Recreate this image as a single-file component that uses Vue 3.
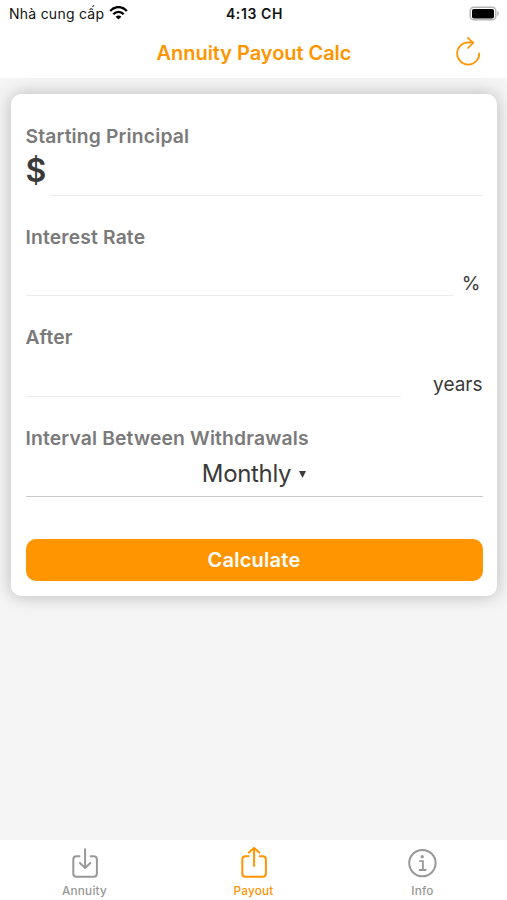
<script setup>
import { ref } from 'vue'

const principal = ref('')
const rate = ref('')
const years = ref('')
const interval = ref('Monthly')
const active = ref('payout')

function reset() {
  principal.value = ''
  rate.value = ''
  years.value = ''
}
</script>

<template>
  <div class="screen">
    <header class="top">
      <div class="status">
        <div class="carrier">
          <span class="carrier-name">Nhà cung cấp</span>
          <svg class="wifi" width="19" height="14" viewBox="0 0 19 14" fill="none" stroke="#000" stroke-width="2.4">
            <path d="M1.200 5C6-.2 13-.2 17.800 5" />
            <path d="M4.300 8.300C7.300 5.100 11.700 5.100 14.700 8.300" />
            <path d="M9.500 13.600L6.600 10.700C8.300 9 10.700 9 12.400 10.700Z" fill="#000" stroke="none" />
          </svg>
        </div>
        <span class="clock">4:13 CH</span>
        <svg class="battery" width="31" height="15" viewBox="0 0 31 15">
          <rect x="1.200" y="1.200" width="25.600" height="12.600" rx="3.600" fill="#fff" stroke="#b4b4b4" stroke-width="1.500" />
          <rect x="3" y="3" width="22" height="9.500" rx="1.800" fill="#000" />
          <path d="M28.300 5V10C30.300 9.200 30.300 5.800 28.300 5Z" fill="#b4b4b4" />
        </svg>
      </div>
      <div class="nav">
        <h1 class="title">Annuity Payout Calc</h1>
        <button class="reset" aria-label="Reset" @click="reset">
          <svg width="26" height="30" viewBox="0 0 26 30" fill="none" stroke="#ff9500" stroke-width="1.700" stroke-linecap="round" stroke-linejoin="round">
            <path d="M24.300 15.300A11.100 11.100 0 1 1 13.200 4.400H18" />
            <path d="M12.900 -0.100L18.200 4.900L12.900 10" />
          </svg>
        </button>
      </div>
    </header>

    <main class="content">
      <form class="card" @submit.prevent>
        <div class="field">
          <label class="label" for="principal">Starting Principal</label>
          <div class="row">
            <span class="dollar">$</span>
            <input id="principal" v-model="principal" class="input" />
          </div>
        </div>
        <div class="field">
          <label class="label" for="rate">Interest Rate</label>
          <div class="row">
            <input id="rate" v-model="rate" class="input" />
            <span class="unit percent">%</span>
          </div>
        </div>
        <div class="field">
          <label class="label" for="years">After</label>
          <div class="row">
            <input id="years" v-model="years" class="input" />
            <span class="unit years">years</span>
          </div>
        </div>
        <div class="field last">
          <span class="label">Interval Between Withdrawals</span>
          <div class="select">
            <span class="value">{{ interval }}</span>
            <svg class="caret" width="7" height="8" viewBox="0 0 7 8"><path d="M0 1H7L3.500 8Z" fill="#3a3a3a" /></svg>
          </div>
        </div>
        <button class="calculate" type="submit">Calculate</button>
      </form>
    </main>

    <nav class="tabs">
      <button class="tab" :class="{ active: active === 'annuity' }" @click="active = 'annuity'">
        <svg width="30" height="34" viewBox="0 0 30 34" fill="none" stroke="currentColor" stroke-width="2" stroke-linecap="round" stroke-linejoin="round">
          <path d="M9.500 9.300H6.500Q3.300 9.300 3.300 12.500V26.500Q3.300 29.700 6.500 29.700H23.700Q26.900 29.700 26.900 26.500V12.500Q26.900 9.300 23.700 9.300H20.700" />
          <path d="M15.100 2.300V20.800M9.900 16L15.100 20.900L20.300 16" />
        </svg>
        <span class="tab-label">Annuity</span>
      </button>
      <button class="tab" :class="{ active: active === 'payout' }" @click="active = 'payout'">
        <svg width="30" height="34" viewBox="0 0 30 34" fill="none" stroke="currentColor" stroke-width="2" stroke-linecap="round" stroke-linejoin="round">
          <path d="M9.500 9.300H6.500Q3.300 9.300 3.300 12.500V26.500Q3.300 29.700 6.500 29.700H23.700Q26.900 29.700 26.900 26.500V12.500Q26.900 9.300 23.700 9.300H20.700" />
          <path d="M15.100 19V1M9.900 5.600L15.100 0.900L20.300 5.600" />
        </svg>
        <span class="tab-label">Payout</span>
      </button>
      <button class="tab" :class="{ active: active === 'info' }" @click="active = 'info'">
        <svg width="30" height="34" viewBox="0 0 30 34" fill="none" stroke="currentColor" stroke-width="2">
          <circle cx="14.400" cy="16.100" r="13.200" />
          <circle cx="14.200" cy="9.800" r="1.700" fill="currentColor" stroke="none" />
          <path d="M11.200 14.200H14.900V23M10.800 23H18.400" stroke-width="1.800" />
        </svg>
        <span class="tab-label">Info</span>
      </button>
    </nav>
  </div>
</template>

<style>
body {
  background: #f5f5f5;
}
</style>

<style scoped>
.screen {
  display: flex;
  flex-direction: column;
  height: 900px;
  overflow: hidden;
  font-family: Inter, "Liberation Sans", sans-serif;
  background: #f5f5f5;
  color: #3a3a3a;
}

.screen * {
  box-sizing: border-box;
}

button {
  padding: 0;
  border: 0;
  background: none;
  font-family: inherit;
}

.top {
  flex: none;
  height: 78px;
  background: #fff;
}

.status {
  display: grid;
  grid-template-columns: 1fr auto 1fr;
  align-items: center;
  height: 27px;
  padding: 0 7px 0 9px;
  color: #111;
  font-size: 14px;
  line-height: 27px;
}

.carrier {
  display: flex;
  align-items: center;
  gap: 5px;
}

.carrier-name {
  letter-spacing: 0.25px;
}

.wifi {
  margin-top: -2px;
}

.clock {
  font-weight: 600;
  letter-spacing: 0.6px;
}

.battery {
  justify-self: end;
}

.nav {
  display: grid;
  grid-template-columns: 1fr auto 1fr;
  align-items: center;
  height: 51px;
  padding-right: 26px;
  padding-left: 27px;
}

.title {
  grid-column: 2;
  margin: 0;
  padding-top: 1px;
  color: #ff9500;
  font-size: 20px;
  font-weight: 600;
  letter-spacing: -0.05px;
  line-height: 51px;
}

.reset {
  justify-self: end;
  height: 30px;
}

.reset svg {
  overflow: visible;
}

.content {
  flex: 1;
  padding: 16px 10px 0 11px;
}

.card {
  height: 502px;
  padding: 30px 14.5px 0;
  border-radius: 10px;
  background: #fff;
  box-shadow: 0 0 18px rgba(0, 0, 0, 0.25);
}

.field {
  height: 100.600px;
}

.label {
  display: block;
  height: 24px;
  color: #7a7a7a;
  font-size: 19.300px;
  font-weight: 600;
  letter-spacing: 0.16px;
  line-height: 24px;
  white-space: nowrap;
}

.row {
  display: flex;
  height: 47.500px;
}

.input {
  flex: 1;
  min-width: 0;
  padding: 0;
  border: 0;
  border-bottom: 1px solid #ececec;
  outline: 0;
  background: transparent;
  font: inherit;
}

.dollar {
  width: 24.500px;
  font-size: 32px;
  font-weight: 600;
  line-height: 46px;
}

.unit {
  font-size: 19px;
  line-height: 24px;
  text-align: right;
}

.percent {
  width: 30px;
  padding-top: 23px;
  padding-right: 2px;
}

.years {
  width: 82px;
  padding-top: 24px;
}

.last {
  height: 113px;
}

.select {
  display: flex;
  align-items: center;
  justify-content: center;
  gap: 8px;
  height: 47px;
  border-bottom: 1px solid #c8c8c8;
}

.value {
  padding-top: 2px;
  font-size: 24px;
  letter-spacing: -0.35px;
  line-height: 46px;
}

.caret {
  margin-top: 2px;
}

.calculate {
  display: block;
  width: 100%;
  height: 42.500px;
  border-radius: 10px;
  background: #ff9500;
  color: #fff;
  font-size: 20px;
  font-weight: 600;
  letter-spacing: 0.25px;
  line-height: 43px;
}

.tabs {
  display: grid;
  grid-template-columns: repeat(3, 1fr);
  flex: none;
  height: 60px;
  background: #fff;
}

.tab {
  display: flex;
  flex-direction: column;
  align-items: center;
  padding-top: 7px;
  color: #989898;
}

.tab.active {
  color: #ff9500;
}

.tab-label {
  font-size: 11.800px;
  font-weight: 500;
  letter-spacing: 0.2px;
  line-height: 20px;
}
</style>
